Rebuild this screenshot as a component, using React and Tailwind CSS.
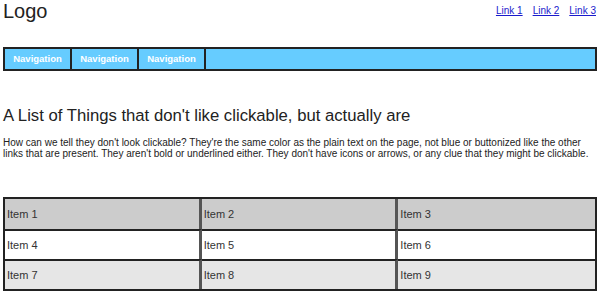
export default function App() {
  const rows = [
    { bg: 'bg-[#cccccc]', items: ['Item 1', 'Item 2', 'Item 3'] },
    { bg: 'bg-white', items: ['Item 4', 'Item 5', 'Item 6'] },
    { bg: 'bg-[#e6e6e6]', items: ['Item 7', 'Item 8', 'Item 9'] },
  ]

  return (
    <div className="w-[600px] h-[294px] bg-white px-[3px] font-['Liberation_Sans',Arial,sans-serif] text-[#222] overflow-hidden">
      {/* Header */}
      <div className="flex justify-between items-start h-[23px]">
        <div className="text-[20px] leading-[23px]">Logo</div>
        <div className="flex gap-[10px] text-[10px] leading-[12px] pt-[5px] pr-[1px]">
          <a href="#" className="text-[#1a1acc] underline">Link 1</a>
          <a href="#" className="text-[#1a1acc] underline">Link 2</a>
          <a href="#" className="text-[#1a1acc] underline">Link 3</a>
        </div>
      </div>

      {/* Nav bar */}
      <div className="mt-[24px] flex h-[24px] bg-[#66ccff] border-2 border-[#222]">
        {['Navigation', 'Navigation', 'Navigation'].map((n, i) => (
          <div key={i} className="w-[67px] flex items-center justify-center border-r-2 border-[#222] text-white font-bold text-[9.5px]">
            {n}
          </div>
        ))}
      </div>

      {/* Content */}
      <h1 className="mt-[34px] text-[16.7px] leading-[22px]">A List of Things that don't like clickable, but actually are</h1>
      <p className="mt-[10px] text-[10px] leading-[11px] text-[#222]">
        How can we tell they don't look clickable? They're the same color as the plain text on the page, not blue or buttonized like the other links that are present. They aren't bold or underlined either. They don't have icons or arrows, or any clue that they might be clickable.
      </p>

      {/* Table */}
      <div className="mt-[38px] border-2 border-[#222] grid grid-cols-3">
        {rows.map((r, ri) =>
          r.items.map((item, ci) => (
            <div
              key={item}
              className={`${r.bg} h-[30px] flex items-center pl-[2px] text-[11px] text-[#333] ${ri > 0 ? 'border-t-2 border-t-[#222]' : ''} ${ci < 2 ? 'border-r-[3px] border-r-[#555]' : ''}`}
            >
              {item}
            </div>
          ))
        )}
      </div>
    </div>
  )
}
